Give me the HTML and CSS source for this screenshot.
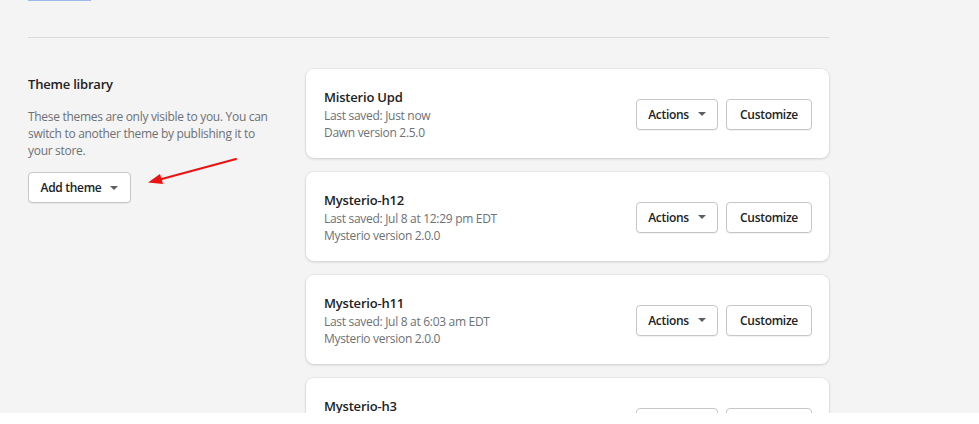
FILE: index.html
```html
<!DOCTYPE html>
<html>
<head>
<meta charset="utf-8">
<link rel="stylesheet" href="styles.css">
</head>
<body>
<div class="page">
  <div class="wrap">
    <div class="top-link"></div>
    <hr class="divider">
    <section class="section">
      <div class="annotation">
        <h2 class="ann-title">Theme library</h2>
        <p class="ann-desc">These themes are only visible to you. You can switch to another theme by publishing it to your store.</p>
        <button class="btn btn-add">Add theme <span class="caret"></span></button>
        <svg class="arrow" width="100" height="30" viewBox="0 0 100 30">
          <line x1="90" y1="2" x2="12" y2="23" stroke="#ee1111" stroke-width="2" stroke-linecap="round"/>
          <polygon points="2,25.5 14,17 17,27" fill="#ee1111"/>
        </svg>
      </div>
      <div class="cards">
        <div class="card">
          <div class="info">
            <div class="name">Misterio Upd</div>
            <div class="meta">Last saved: Just now</div>
            <div class="meta">Dawn version 2.5.0</div>
          </div>
          <div class="actions">
            <button class="btn btn-actions">Actions <span class="caret"></span></button>
            <button class="btn btn-customize">Customize</button>
          </div>
        </div>
        <div class="card">
          <div class="info">
            <div class="name">Mysterio-h12</div>
            <div class="meta">Last saved: Jul 8 at 12:29 pm EDT</div>
            <div class="meta">Mysterio version 2.0.0</div>
          </div>
          <div class="actions">
            <button class="btn btn-actions">Actions <span class="caret"></span></button>
            <button class="btn btn-customize">Customize</button>
          </div>
        </div>
        <div class="card">
          <div class="info">
            <div class="name">Mysterio-h11</div>
            <div class="meta">Last saved: Jul 8 at 6:03 am EDT</div>
            <div class="meta">Mysterio version 2.0.0</div>
          </div>
          <div class="actions">
            <button class="btn btn-actions">Actions <span class="caret"></span></button>
            <button class="btn btn-customize">Customize</button>
          </div>
        </div>
        <div class="card">
          <div class="info">
            <div class="name">Mysterio-h3</div>
            <div class="meta">Last saved: Jul 8 at 5:41 am EDT</div>
            <div class="meta">Mysterio version 2.0.0</div>
          </div>
          <div class="actions">
            <button class="btn btn-actions">Actions <span class="caret"></span></button>
            <button class="btn btn-customize">Customize</button>
          </div>
        </div>
      </div>
    </section>
  </div>
</div>
</body>
</html>
```
FILE: styles.css
```css
* { box-sizing: border-box; }
html, body { margin: 0; padding: 0; background: #ffffff; }
body {
  font-family: "Open Sans", "Noto Sans", "Liberation Sans", sans-serif;
  color: #202223;
}
.page {
  height: 413px;
  overflow: hidden;
  background: #f4f4f4;
}
.wrap {
  width: 829px;
  padding-left: 28px;
}
.top-link {
  width: 63px;
  height: 1px;
  background: #9bb8e8;
}
.divider {
  margin: 36px 0 0 0;
  border: 0;
  height: 1px;
  background: #d9d9d9;
}
.section {
  display: flex;
  gap: 20px;
  padding-top: 31px;
}
.annotation {
  width: 258px;
  flex: none;
  position: relative;
  padding-top: 6px;
}
.ann-title {
  margin: 0;
  font-size: 13px;
  font-weight: 600;
  line-height: 18px;
  letter-spacing: -0.2px;
  color: #202223;
}
.ann-desc {
  max-width: 250px;
  margin: 15px 0 0 0;
  font-size: 12px;
  line-height: 17px;
  letter-spacing: -0.3px;
  color: #6d7175;
}
.btn {
  font-family: inherit;
  font-size: 12px;
  font-weight: 600;
  letter-spacing: -0.3px;
  color: #202223;
  background: #ffffff;
  border: 1px solid #c4c6c8;
  border-radius: 4px;
  height: 31px;
  padding: 0 14px;
  display: inline-flex;
  align-items: center;
  justify-content: center;
  white-space: nowrap;
  box-shadow: 0 1px 0 rgba(0,0,0,0.05);
  cursor: pointer;
}
.btn-add {
  margin-top: 13px;
  width: 103px;
}
.caret {
  display: inline-block;
  width: 0;
  height: 0;
  margin-left: 9px;
  border-left: 4px solid transparent;
  border-right: 4px solid transparent;
  border-top: 4px solid #5c5f62;
}
.arrow {
  position: absolute;
  left: 118px;
  top: 88px;
}
.cards {
  width: 523px;
  display: flex;
  flex-direction: column;
  gap: 14px;
}
.card {
  background: #ffffff;
  border-radius: 8px;
  box-shadow: 0 0 0 1px rgba(63,63,68,0.04), 0 1px 3px rgba(63,63,68,0.18);
  padding: 18px 17px 17px 18px;
  display: flex;
  align-items: center;
  justify-content: space-between;
}
.name {
  font-size: 13px;
  font-weight: 600;
  line-height: 20px;
  letter-spacing: -0.2px;
  color: #202223;
}
.meta {
  font-size: 12px;
  line-height: 17px;
  letter-spacing: -0.3px;
  color: #6d7175;
}
.actions {
  display: flex;
  gap: 8px;
}
.btn-actions { width: 82px; }
.btn-customize { width: 86px; }
```
